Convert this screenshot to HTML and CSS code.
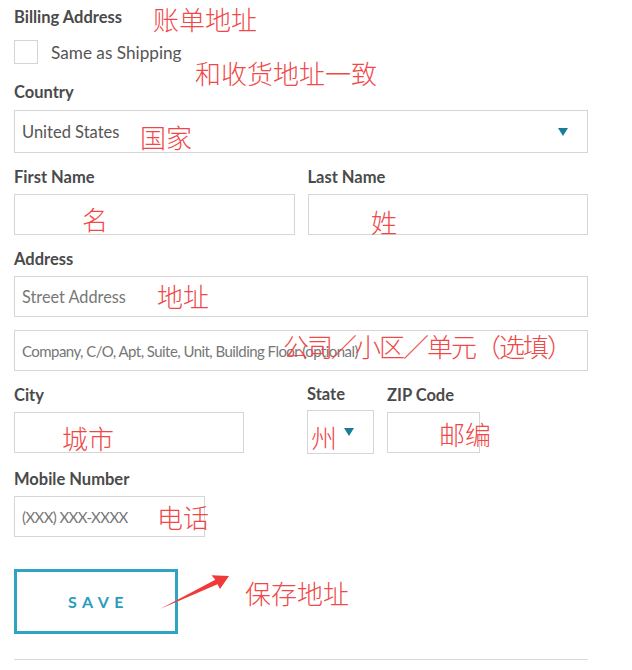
FILE: index.html
```html
<!DOCTYPE html>
<html lang="en">
<head>
<meta charset="utf-8">
<title>Billing Address</title>
<link rel="stylesheet" href="styles.css">
</head>
<body>
<div class="form">
  <div class="label title">Billing Address</div>
  <div class="check-row">
    <span class="checkbox"></span>
    <span class="check-text">Same as Shipping</span>
  </div>

  <div class="group country">
    <div class="label">Country</div>
    <div class="field select tall">
      <span class="value">United States</span>
      <span class="caret"></span>
    </div>
  </div>

  <div class="row names">
    <div class="group">
      <div class="label">First Name</div>
      <div class="field"></div>
    </div>
    <div class="group">
      <div class="label">Last Name</div>
      <div class="field"></div>
    </div>
  </div>

  <div class="group">
    <div class="label">Address</div>
    <div class="field"><span class="ph street">Street Address</span></div>
    <div class="field second"><span class="ph company">Company, C/O, Apt, Suite, Unit, Building Floor (optional)</span></div>
  </div>

  <div class="row place">
    <div class="group city">
      <div class="label">City</div>
      <div class="field"></div>
    </div>
    <div class="group state">
      <div class="label">State</div>
      <div class="field select state-select"><span class="caret"></span></div>
    </div>
    <div class="group zip">
      <div class="label">ZIP Code</div>
      <div class="field"></div>
    </div>
  </div>

  <div class="group mobile">
    <div class="label">Mobile Number</div>
    <div class="field"><span class="ph phone">(XXX) XXX-XXXX</span></div>
  </div>

  <button class="save" type="button">SAVE</button>
  <div class="rule"></div>

  <span class="note n1">账单地址</span>
  <span class="note n2">和收货地址一致</span>
  <span class="note n3">国家</span>
  <span class="note n4">名</span>
  <span class="note n5">姓</span>
  <span class="note n6">地址</span>
  <span class="note n7">公司／小区／单元（选填）</span>
  <span class="note n8">城市</span>
  <span class="note n9">州</span>
  <span class="note n10">邮编</span>
  <span class="note n11">电话</span>
  <span class="note n12">保存地址</span>
  <svg class="arrow" width="80" height="45" viewBox="0 0 80 45">
    <polygon points="5,39 60.3,9.7 56.5,5.2 74,6 65,19 62.5,14.3" fill="#f03a3a"/>
  </svg>
</div>
</body>
</html>
```

FILE: styles.css
```css
html, body {
  margin: 0;
  padding: 0;
  background: #ffffff;
}

body {
  font-family: "Lato", "Source Sans Pro", "Open Sans", sans-serif;
  color: #4a4a4a;
}

.form {
  position: relative;
  width: 574px;
  padding: 7px 44px 10px 14px;
}

.label {
  font-size: 16.5px;
  font-weight: 700;
  line-height: 20px;
  color: #4a4a4a;
  margin-bottom: 7px;
}

.title {
  margin-bottom: 0;
}

.check-row {
  display: flex;
  align-items: center;
  gap: 13px;
  margin-top: 13px;
  height: 24px;
}

.checkbox {
  width: 24px;
  height: 24px;
  box-sizing: border-box;
  border: 1px solid #d4d4d4;
  background: #fff;
}

.check-text {
  font-size: 17.2px;
  color: #555;
}

.group {
  margin-bottom: 14px;
}

.country {
  margin-top: 18px;
}

.country .label {
  margin-bottom: 8px;
}

.field {
  box-sizing: border-box;
  height: 41px;
  border: 1px solid #d6d6d6;
  background: #fff;
  display: flex;
  align-items: center;
  padding: 0 7px;
}

.field.tall {
  height: 43px;
}

.field.second {
  margin-top: 13px;
}

.select {
  justify-content: space-between;
}

.value {
  font-size: 16.5px;
  color: #555;
}

.ph {
  font-size: 15px;
  color: #777;
  white-space: nowrap;
}

.street {
  font-size: 16.3px;
}

.company {
  font-size: 15px;
  letter-spacing: -0.55px;
}

.phone {
  letter-spacing: -0.6px;
}

.caret {
  width: 0;
  height: 0;
  border-left: 5px solid transparent;
  border-right: 5px solid transparent;
  border-top: 8px solid #1b7c98;
  margin-right: 12px;
}

.row {
  display: flex;
  align-items: flex-start;
}

.names {
  gap: 13px;
}

.names .group {
  flex: 1;
}

.place {
  margin-top: 1px;
}

.city {
  width: 230px;
  margin-right: 63px;
}

.state {
  width: 67px;
  margin-right: 13px;
}

.state .label {
  margin-top: -1px;
}

.state-select {
  height: 44px;
  margin-top: -1px;
  justify-content: flex-end;
}

.state-select .caret {
  margin-right: 12px;
}

.zip {
  width: 93px;
}

.mobile {
  width: 191px;
  margin-top: 1px;
}

.save {
  display: block;
  margin-top: 32px;
  width: 164px;
  height: 65px;
  box-sizing: border-box;
  border: 3px solid #2ea4c3;
  background: #fff;
  font-family: "Lato", sans-serif;
  font-size: 16px;
  font-weight: 700;
  letter-spacing: 5.5px;
  color: #2a9dbd;
  padding: 0 0 0 5px;
}

.rule {
  margin-top: 25px;
  height: 1px;
  background: #d9d9d9;
}

.note {
  position: absolute;
  font-family: "Noto Sans CJK SC", sans-serif;
  font-size: 26px;
  line-height: 30px;
  color: #f04848;
  font-weight: 300;
  white-space: nowrap;
}

.n1 { left: 153px; top: 4px; }
.n2 { left: 195px; top: 58px; }
.n3 { left: 140px; top: 122px; }
.n4 { left: 82px; top: 204px; }
.n5 { left: 371px; top: 207px; }
.n6 { left: 157px; top: 281px; }
.n7 { left: 283px; top: 331px; letter-spacing: -2px; }
.n8 { left: 62px; top: 423px; }
.n9 { left: 311px; top: 422px; }
.n10 { left: 439px; top: 419px; }
.n11 { left: 157px; top: 502px; }
.n12 { left: 245px; top: 578px; }

.arrow {
  position: absolute;
  left: 155px;
  top: 570px;
}
```
